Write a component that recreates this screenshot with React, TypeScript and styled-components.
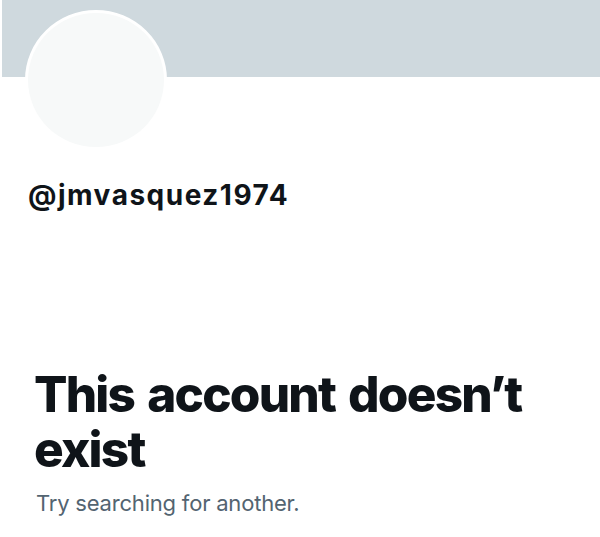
import React from "react";
import styled, { createGlobalStyle } from "styled-components";

const Global = createGlobalStyle`
  html, body { margin: 0; padding: 0; background: #ffffff; }
  body { font-family: Inter, "Noto Sans", "Liberation Sans", sans-serif; -webkit-font-smoothing: antialiased; }
`;

const Page = styled.div`
  width: 600px;
  height: 537px;
  background: #ffffff;
  display: flex;
  flex-direction: column;
  overflow: hidden;
`;

const Banner = styled.div`
  height: 77px;
  margin-left: 2px;
  background: #cfd9de;
  flex-shrink: 0;
`;

const Avatar = styled.div`
  width: 136px;
  height: 134px;
  margin: -67px 0 0 25px;
  border-radius: 50%;
  border: 3px solid #ffffff;
  background: #f7f9f9;
  flex-shrink: 0;
`;

const Handle = styled.div`
  margin: 28px 0 0 28px;
  font-size: 28px;
  font-weight: 700;
  color: #0f1419;
  letter-spacing: 1.5px;
  line-height: 34px;
`;

const Notice = styled.div`
  display: flex;
  flex-direction: column;
  margin: 155px 0 0 34px;
`;

const Title = styled.h1`
  margin: 0;
  font-size: 49.5px;
  font-weight: 800;
  line-height: 55px;
  color: #0f1419;
  letter-spacing: -1.8px;
  word-spacing: 4px;
`;

const Subtitle = styled.p`
  margin: 12px 0 0 2px;
  font-size: 22px;
  font-weight: 400;
  line-height: 28px;
  color: #536471;
  letter-spacing: -0.2px;
`;

export default function App() {
  return (
    <Page>
      <Global />
      <Banner />
      <Avatar />
      <Handle>@jmvasquez1974</Handle>
      <Notice>
        <Title>
          This account doesn’t
          <br />
          exist
        </Title>
        <Subtitle>Try searching for another.</Subtitle>
      </Notice>
    </Page>
  );
}
